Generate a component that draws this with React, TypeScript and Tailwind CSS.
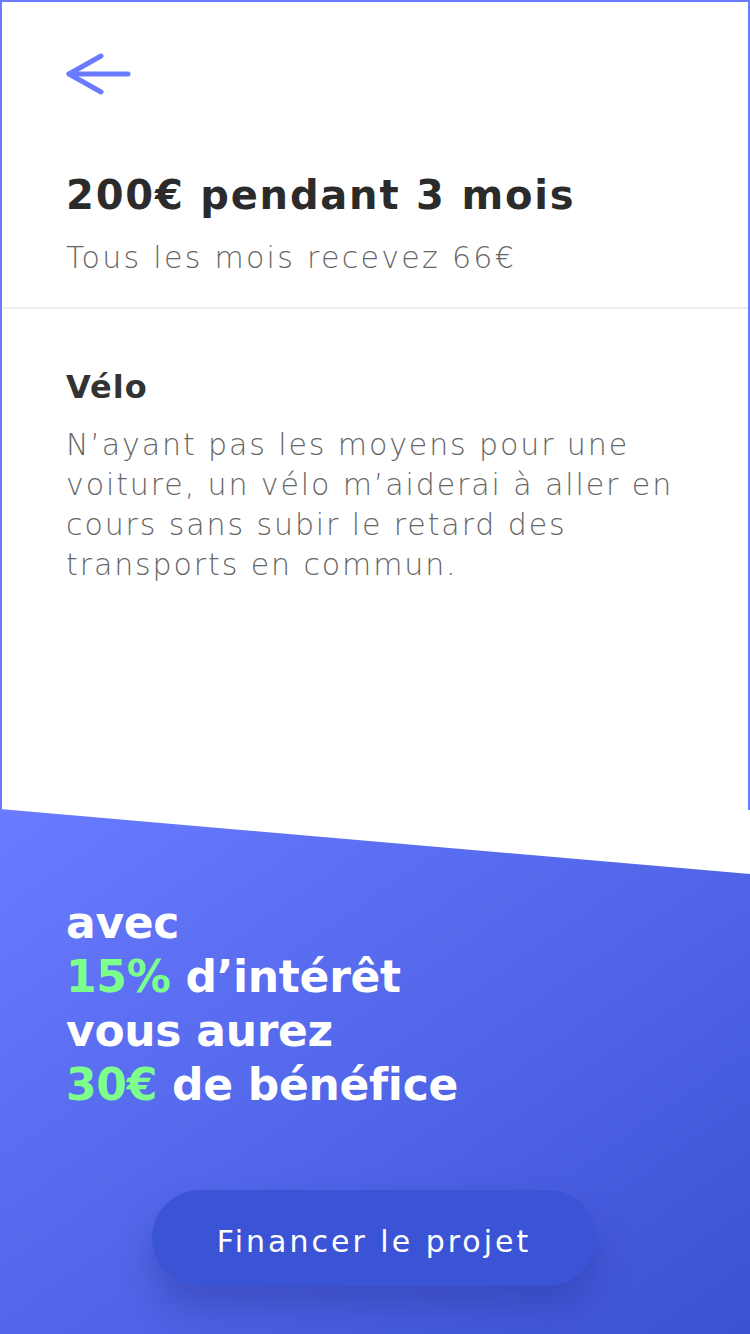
import React from "react";

const font = { fontFamily: '"DejaVu Sans", "Noto Sans", sans-serif' };

export default function App() {
  return (
    <div className="w-[750px] h-[1334px] flex flex-col bg-white overflow-hidden" style={font}>
      <div className="h-[810px] shrink-0 flex flex-col border-t-2 border-x-2 border-[#6b7bff]">
        <div className="pl-[64px] pt-[50px] pb-[31px]">
          <svg width="66" height="44" viewBox="0 0 66 44" fill="none" stroke="#6b7bff" strokeWidth="5" strokeLinecap="round" strokeLinejoin="round">
            <path d="M3 22 H62" />
            <path d="M35 4 L3 22 L35 40" />
          </svg>
          <h1 className="mt-[75px] text-[40px] leading-[48px] font-bold text-[#2b2b2b] tracking-[1.8px]">200€ pendant 3 mois</h1>
          <p className="mt-[21px] text-[30px] leading-[36px] font-light text-[#666666] tracking-[2.3px]">Tous les mois recevez 66€</p>
        </div>
        <div className="h-[2px] bg-[#ededed]" />
        <div className="pl-[64px] pr-[10px] pt-[58px]">
          <h2 className="text-[32px] leading-[40px] font-semibold text-[#333333] tracking-[1px]">Vélo</h2>
          <p className="mt-[18px] text-[30px] leading-[40px] font-light text-[#666666] tracking-[1.9px] whitespace-nowrap">
            N’ayant pas les moyens pour une<br />
            voiture, un vélo m’aiderai à aller en<br />
            cours sans subir le retard des<br />
            transports en commun.
          </p>
        </div>
      </div>
      <div className="flex-1 -mt-[1px] bg-linear-to-br from-[#6a7bff] to-[#3b52d3] [clip-path:polygon(0_0,100%_65px,100%_100%,0_100%)] flex flex-col pl-[66px] pt-[87px]">
        <div className="text-[44px] leading-[54px] font-bold text-white tracking-[-0.3px]">
          <div>avec</div>
          <div><span className="text-[#7dff8c]">15%</span> d’intérêt</div>
          <div>vous aurez</div>
          <div><span className="text-[#7dff8c]">30€</span> de bénéfice</div>
        </div>
        <div className="mt-[78px] ml-[86px] w-[444px] h-[96px] rounded-full bg-[#3b54d6] shadow-[0_22px_34px_rgba(35,45,140,0.35)] flex items-center justify-center pt-[6px]">
          <span className="text-[30px] font-medium text-white tracking-[3px]">Financer le projet</span>
        </div>
      </div>
    </div>
  );
}
